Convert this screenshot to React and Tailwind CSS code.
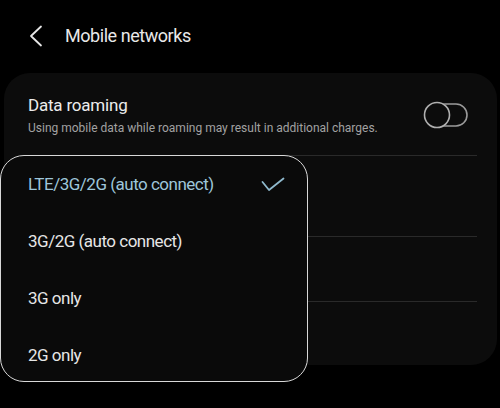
import React from 'react';

const font = { fontFamily: 'Roboto, "Noto Sans", sans-serif' };

function Toggle() {
  return (
    <svg width="46" height="28" viewBox="0 0 46 28" className="shrink-0">
      <rect x="11" y="3" width="33" height="22" rx="11" fill="none" stroke="#9a9a9a" strokeWidth="1.6" />
      <circle cx="14" cy="14" r="12.5" fill="#0c0c0c" stroke="#b0b0b0" strokeWidth="1.6" />
    </svg>
  );
}

export default function App() {
  const options = ['LTE/3G/2G (auto connect)', '3G/2G (auto connect)', '3G only', '2G only'];

  return (
    <div className="w-[500px] h-[408px] bg-black text-[#e8e8e8] relative overflow-hidden" style={font}>
      {/* header */}
      <div className="flex items-center h-[73px] pb-[2px]">
        <svg width="14" height="22" viewBox="0 0 14 22" className="ml-[29px]">
          <path d="M12 1.5 L2 11 L12 20.5" fill="none" stroke="#e6e6e6" strokeWidth="1.8" strokeLinecap="round" strokeLinejoin="round" />
        </svg>
        <span className="ml-[22px] text-[18px] tracking-[-0.45px]">Mobile networks</span>
      </div>

      {/* settings card */}
      <div className="ml-[4px] mr-[3px] h-[292px] rounded-[26px] bg-[#0c0c0c] flex flex-col">
        <div className="h-[82px] flex items-center justify-between pl-[24px] pr-[28px] pt-[2px]">
          <div className="flex flex-col">
            <span className="text-[17px] leading-[22px] text-[#ececec] tracking-[-0.2px]">Data roaming</span>
            <span className="text-[12px] leading-[18px] text-[#a2a2a2] mt-[3px]">
              Using mobile data while roaming may result in additional charges.
            </span>
          </div>
          <Toggle />
        </div>
        <div className="mx-[20px] border-t border-[#2a2a2a]" />
        <div className="h-[80px]" />
        <div className="mx-[20px] border-t border-[#2a2a2a]" />
        <div className="h-[64px]" />
        <div className="mx-[20px] border-t border-[#2a2a2a]" />
      </div>

      {/* network mode popup */}
      <div className="absolute left-0 top-[155px] w-[308px] h-[227px] rounded-[24px] border border-[#d8d8d8] bg-[#0a0a0a] flex flex-col">
        {options.map((opt, i) => (
          <div key={opt} className="h-[57px] shrink-0 flex items-center justify-between pl-[27px] pr-[22px]">
            <span className={i === 0 ? 'text-[17px] tracking-[-0.5px] text-[#9ec6da]' : 'text-[17px] tracking-[-0.5px] text-[#e6e6e6]'}>{opt}</span>
            {i === 0 && (
              <svg width="24" height="16" viewBox="0 0 24 16">
                <path d="M1.5 5 L8 13 L22.5 1.5" fill="none" stroke="#8fb9cd" strokeWidth="1.8" strokeLinecap="round" strokeLinejoin="round" />
              </svg>
            )}
          </div>
        ))}
      </div>
    </div>
  );
}
